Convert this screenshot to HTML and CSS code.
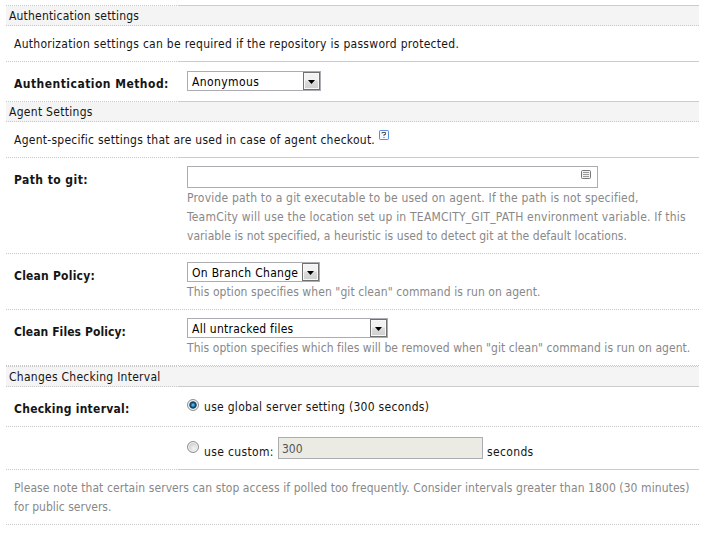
FILE: index.html
```html
<!DOCTYPE html>
<html lang="en">
<head>
<meta charset="utf-8">
<title>VCS root settings</title>
<link rel="stylesheet" href="styles.css">
</head>
<body>
<form class="settings">
  <h2 class="row head dotted"><span class="ls-20">Authentication settings</span></h2>
  <div class="row note mixed"><span class="ls-29">Authorization settings can be required if the repository is password protected.</span></div>
  <div class="row field mixed">
    <b class="label ls-47">Authentication Method:</b>
    <div class="value method"><div class="select w134"><span class="ls-41">Anonymous</span><i class="arrow"></i></div></div>
  </div>
  <h2 class="row head dotted"><span class="ls-29">Agent Settings</span></h2>
  <div class="row note mixed"><span class="ls-26">Agent-specific settings that are used in case of agent checkout.</span><svg class="help" width="10" height="10" viewBox="0 0 10 10"><rect x=".5" y=".5" width="9" height="9" rx=".7" fill="#f4f8ff" stroke="#5c8ddb"/><path d="M3 3.5V2.5H6.5V4.5H5V6M4.5 7.5H5.5" fill="none" stroke="#555"/></svg></div>
  <div class="row field dotted">
    <b class="label ls-44">Path to git:</b>
    <div class="value">
      <div class="textbox path"><svg class="list" width="10" height="9" viewBox="0 0 10 9"><rect x=".5" y=".5" width="9" height="8" rx="1" fill="#f2f2f2" stroke="#777"/><path d="M2 2.5H8M2 4.5H8M2 6.5H8" stroke="#999"/></svg></div>
      <p class="hint"><span class="ls-20">Provide path to a git executable to be used on agent. If the path is not specified,</span><br><span class="ls-21">TeamCity will use the location set up in TEAMCITY_GIT_PATH environment variable. If this</span><br><span class="ls-6">variable is not specified, a heuristic is used to detect git at the default locations.</span></p>
    </div>
  </div>
  <div class="row field dotted">
    <b class="label ls-22">Clean Policy:</b>
    <div class="value">
      <div class="select w133"><span class="ls-29">On Branch Change</span><i class="arrow"></i></div>
      <p class="hint"><span class="ls-8">This option specifies when "git clean" command is run on agent.</span></p>
    </div>
  </div>
  <div class="row field dotted">
    <b class="label ls-8">Clean Files Policy:</b>
    <div class="value">
      <div class="select w201"><span class="ls-26">All untracked files</span><i class="arrow"></i></div>
      <p class="hint"><span class="ls-6">This option specifies which files will be removed when "git clean" command is run on agent.</span></p>
    </div>
  </div>
  <h2 class="row head mixed double"><span class="ls-26">Changes Checking Interval</span></h2>
  <div class="row field dotted">
    <b class="label ls-26">Checking interval:</b>
    <label class="value option"><i class="radio on"></i><span class="ls-29">use global server setting (300 seconds)</span></label>
  </div>
  <div class="row field mixed">
    <b class="label"></b>
    <div class="value option custom"><i class="radio"></i><span class="caption ls-35">use custom:</span><div class="textbox disabled">300</div><span class="ls-35">seconds</span></div>
  </div>
  <p class="row footnote dotted"><span class="ls-8">Please note that certain servers can stop access if polled too frequently. Consider intervals greater than 1800 (30 minutes)</span><br>for public servers.</p>
</form>
</body>
</html>
```
FILE: styles.css
```css
* { box-sizing: border-box; }
body {
  margin: 0;
  background: #fff;
  color: #151515;
  font: 12px/19px "DejaVu Sans Condensed", Tahoma, "DejaVu Sans", sans-serif;
}
h2, p { margin: 0; font: inherit; }
.settings {
  width: 693px;
  margin: 5px 0 0 6px;
  padding-top: 1px;
  white-space: nowrap;
  background:
    repeating-linear-gradient(90deg, #c8c8c8 0 1px, transparent 1px 2px) 0 0 / 172px 1px no-repeat,
    linear-gradient(#ccc, #ccc) right top / 521px 1px no-repeat;
}

/* Row separators: fully dotted, or dotted under the label and solid under the value */
.row { padding-bottom: 1px; background-repeat: no-repeat; }
.dotted {
  background-image: repeating-linear-gradient(90deg, #c8c8c8 0 1px, transparent 1px 2px);
  background-position: left bottom;
  background-size: 100% 1px;
}
.mixed {
  background-image:
    repeating-linear-gradient(90deg, #c8c8c8 0 1px, transparent 1px 2px),
    linear-gradient(#ccc, #ccc);
  background-position: left bottom, right bottom;
  background-size: 172px 1px, 521px 1px;
}

.head { height: 20px; padding: 1px 0 0 3px; background-color: #f4f4f4; }
.head.double {
  height: 21px;
  padding-top: 2px;
  background-image:
    repeating-linear-gradient(90deg, #c8c8c8 0 1px, transparent 1px 2px),
    linear-gradient(#ccc, #ccc),
    repeating-linear-gradient(90deg, #c8c8c8 0 1px, transparent 1px 2px),
    repeating-linear-gradient(90deg, transparent 0 1px, #c8c8c8 1px 2px);
  background-position: left bottom, right bottom, left top, 172px 0;
  background-size: 172px 1px, 521px 1px, 172px 1px, 521px 1px;
}
.note { display: flex; height: 36px; padding: 9px 8px 0; }
.help { margin: -1px 0 0 4px; }
.field { display: grid; grid-template-columns: 172px 1fr; }
.label { padding: 13px 0 0 8px; font-weight: bold; }
.value { padding: 8px 0 7px 9px; }
.method { padding: 9px 0 10px 9px; }
.hint { padding-top: 1px; color: #888; }

.select {
  display: flex;
  justify-content: space-between;
  height: 20px;
  padding-left: 4px;
  border: 1px solid #abadb3;
  background: #fff;
  color: #000;
  line-height: 21px;
}
.w134 { width: 134px; }
.w133 { width: 133px; }
.w201 { width: 201px; }
.arrow {
  display: flex;
  align-items: center;
  justify-content: center;
  width: 17px;
  height: 18px;
  border: 1px solid #707070;
  background: linear-gradient(#f2f2f2 45%, #dcdcdc 50%, #cfcfcf);
  box-shadow: inset 0 0 0 1px #f8f8f8;
}
.arrow::before {
  content: "";
  width: 7px;
  height: 4px;
  margin-top: 2px;
  background: #000;
  clip-path: polygon(0 0, 100% 0, 50% 100%);
}

.textbox { height: 22px; border: 1px solid #abadb3; background: #fff; }
.path { display: flex; justify-content: flex-end; width: 411px; padding: 3px 6px 0 0; }
.disabled {
  width: 205px;
  margin: -6px 4px 0 0;
  padding-left: 3px;
  background: #ebebe4;
  color: #545454;
  line-height: 22px;
}

.option { display: flex; height: 39px; padding: 11px 0 0 9px; }
.custom { height: 42px; padding-top: 16px; }
.caption { width: 74px; }
.radio {
  width: 12px;
  height: 12px;
  margin: 1px 5px 0 0;
  border: 1px solid #8e8f8f;
  border-radius: 50%;
  background: radial-gradient(circle at 60% 65%, #f4f4f4, #c8cbcd 75%);
  box-shadow: inset 0 0 0 1px #f6f6f6;
}
.custom .radio { margin-top: -2px; }
.radio.on {
  background: radial-gradient(circle at 5px 5px, #7fd0ee 0, #3aa6d3 1px, #0b4a76 2.5px, #143a59 3.2px, #dfe3e5 4.2px);
}
.footnote { height: 55px; padding: 9px 8px 0; color: #888; }

/* Per-text tracking */
.ls-6 { letter-spacing: .055px; }
.ls-8 { letter-spacing: .08px; }
.ls-20 { letter-spacing: .19px; }
.ls-21 { letter-spacing: .21px; }
.ls-22 { letter-spacing: .22px; }
.ls-26 { letter-spacing: .26px; }
.ls-29 { letter-spacing: .29px; }
.ls-35 { letter-spacing: .35px; }
.ls-41 { letter-spacing: .4px; }
.ls-44 { letter-spacing: .44px; }
.ls-47 { letter-spacing: .47px; }
```
